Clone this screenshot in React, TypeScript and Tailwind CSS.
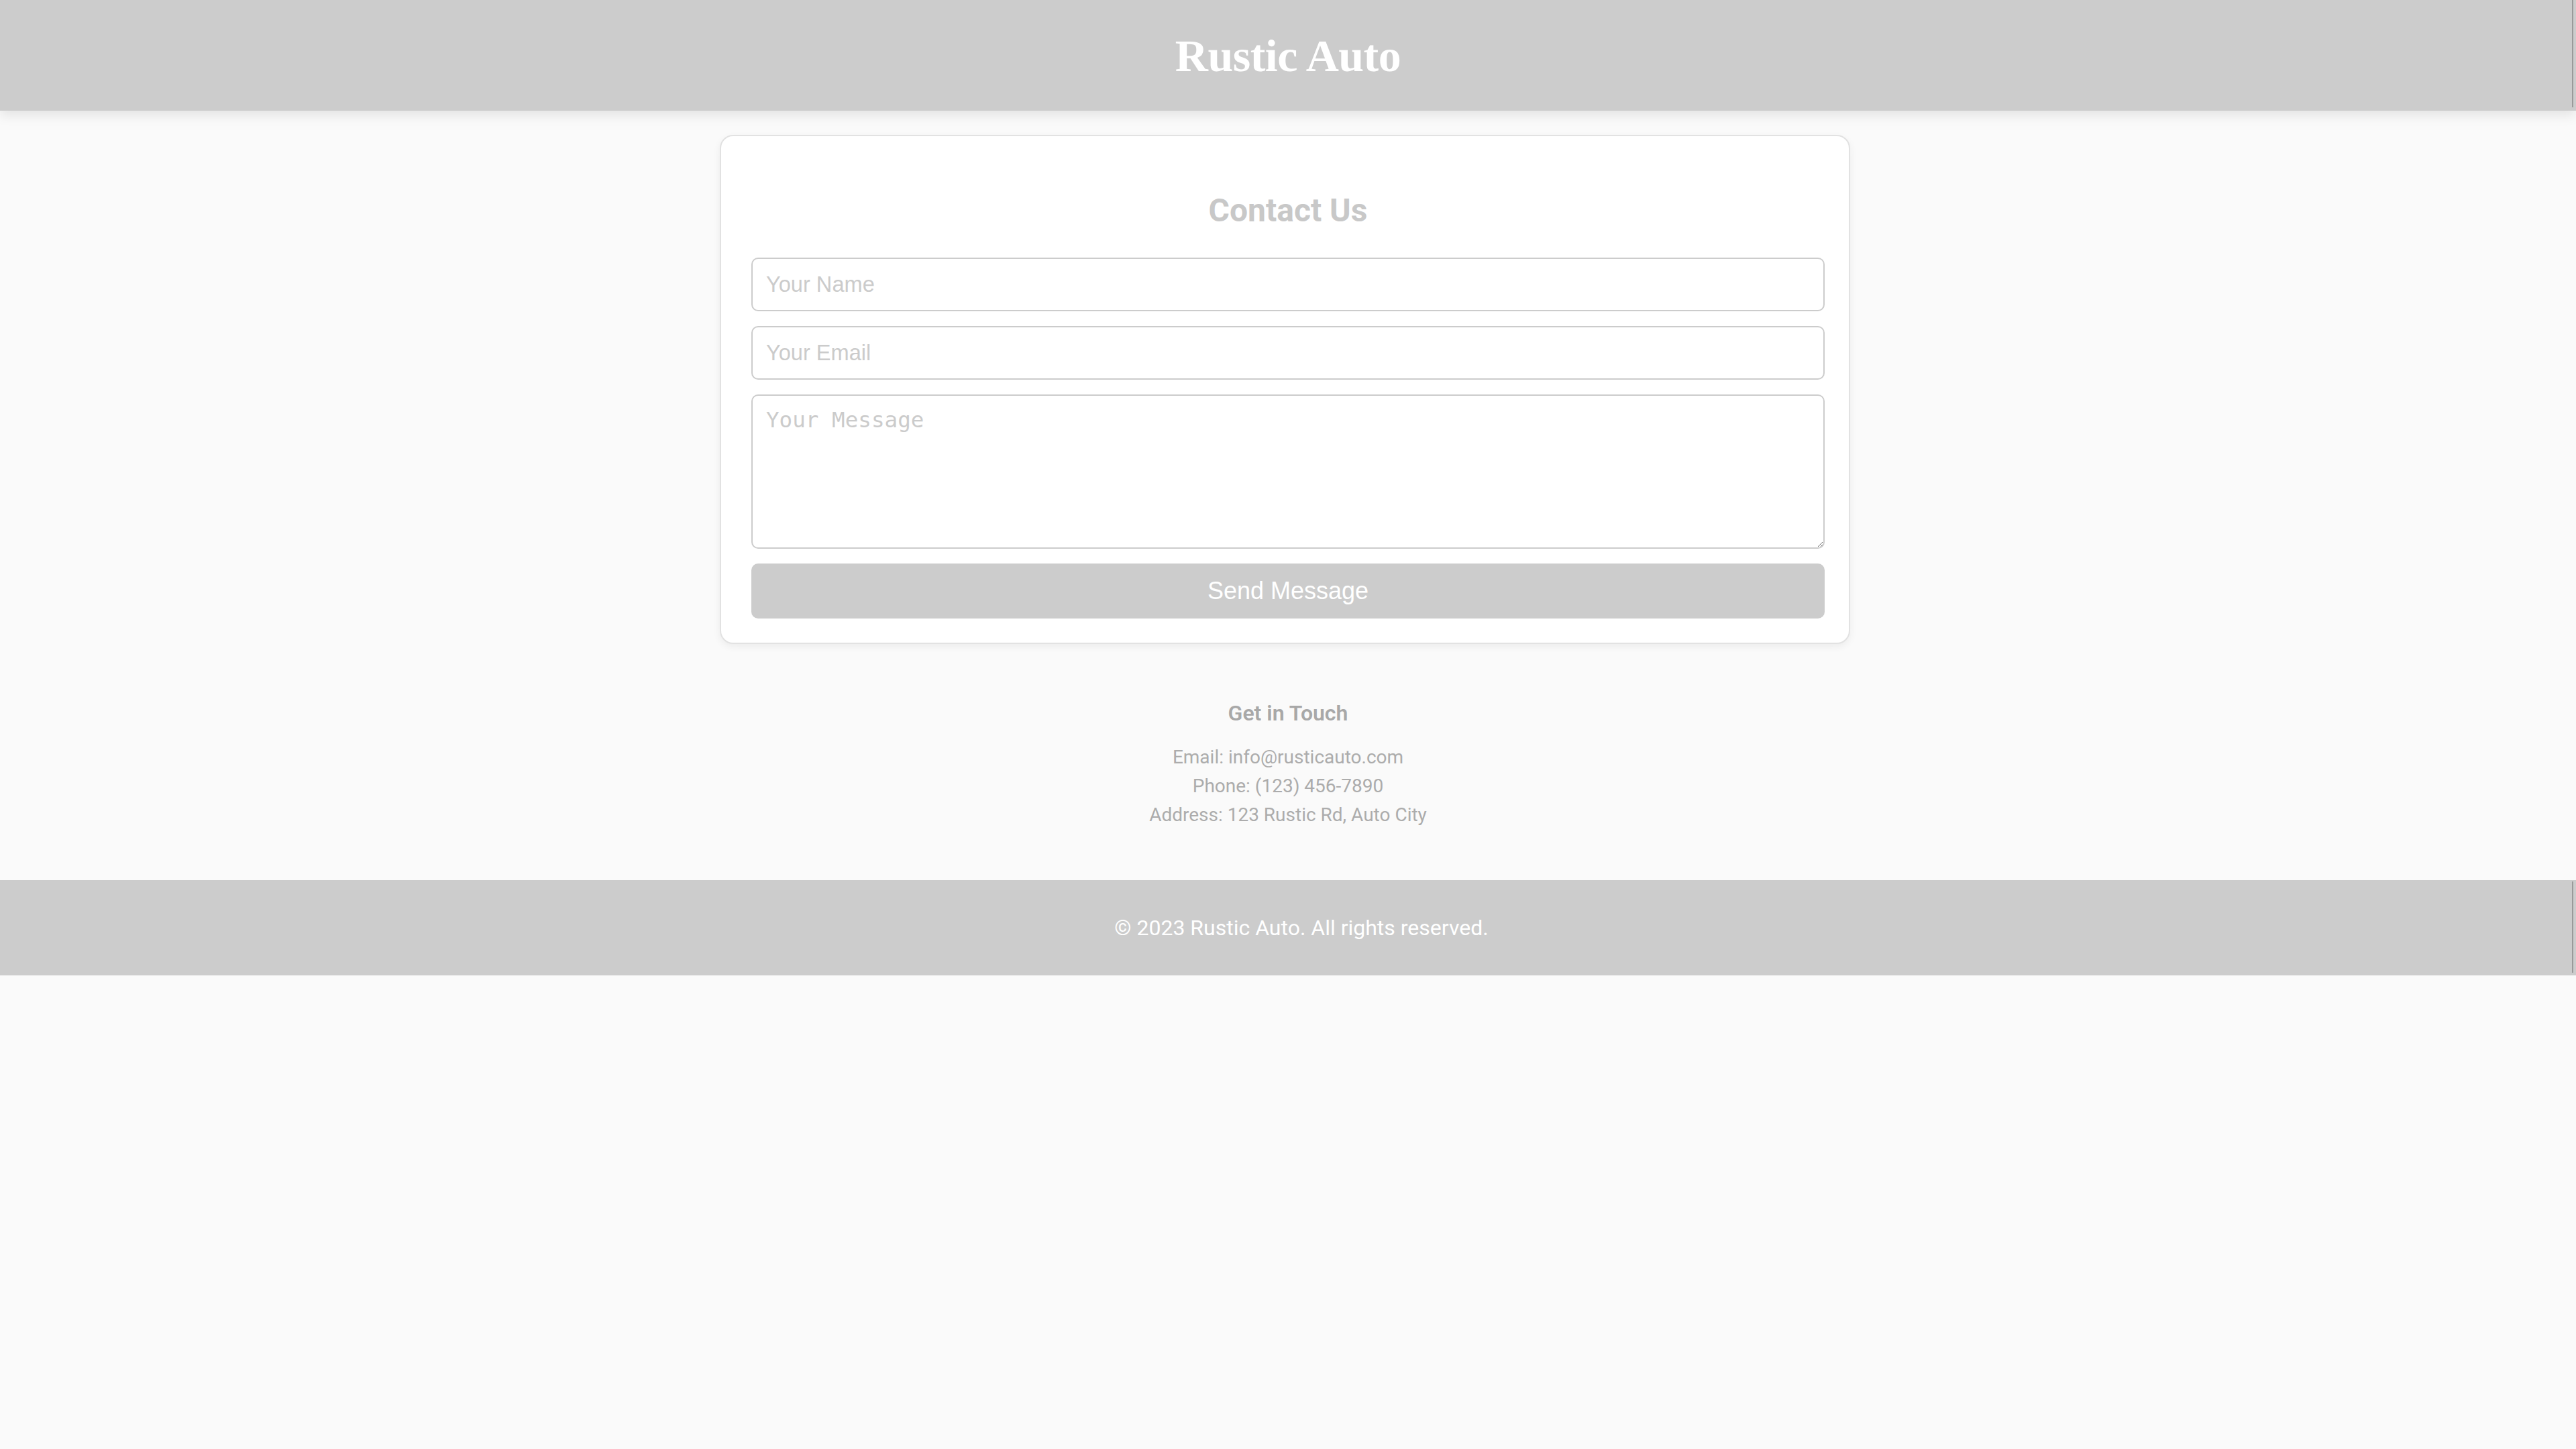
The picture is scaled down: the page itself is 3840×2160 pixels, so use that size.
import React from "react";

export default function App() {
  return (
    <div className="min-h-[2160px] w-full bg-[#fafafa] font-['Roboto',sans-serif]">
      <header className="relative flex h-[165px] w-full items-center justify-center bg-[#cccccc] shadow-[0_6px_18px_rgba(0,0,0,0.1)]">
        <h1 className="font-['Liberation_Serif',serif] text-[68px] font-bold leading-none tracking-[-0.5px] text-white">
          Rustic Auto
        </h1>
        <span className="absolute right-[4px] top-0 h-[160px] w-[2px] bg-[#9a9a9a]" />
      </header>

      <main className="flex w-full flex-col items-center pr-[9px] pt-[36px]">
        <div className="w-[1685px] rounded-[20px] border-2 border-[#e2e2e2] bg-white pb-[36px] pl-[45px] pr-[36px] pt-[83px] shadow-[0_4px_12px_rgba(0,0,0,0.06)]">
          <h2 className="mb-[42px] text-center text-[48px] font-bold leading-[56px] text-[#c8c8c8]">
            Contact Us
          </h2>
          <form className="flex flex-col gap-[22px]" onSubmit={(e) => e.preventDefault()}>
            <input
              type="text"
              placeholder="Your Name"
              className="h-[80px] w-[1600px] rounded-[10px] border-2 border-[#cccccc] bg-white px-[20px] font-['Liberation_Sans',sans-serif] text-[32.6px] text-[#555] placeholder:text-[#cbcbcb] outline-none"
            />
            <input
              type="email"
              placeholder="Your Email"
              className="h-[80px] w-[1600px] rounded-[10px] border-2 border-[#cccccc] bg-white px-[20px] font-['Liberation_Sans',sans-serif] text-[32.6px] text-[#555] placeholder:text-[#cbcbcb] outline-none"
            />
            <textarea
              placeholder="Your Message"
              className="block h-[230px] w-[1600px] rounded-[10px] border-2 border-[#cccccc] bg-white px-[20px] py-[16px] font-['DejaVu_Sans_Mono',monospace] text-[32.6px] leading-[40px] text-[#555] placeholder:text-[#cbcbcb] outline-none"
            />
            <button
              type="submit"
              className="h-[82px] w-[1600px] rounded-[10px] bg-[#cccccc] font-['Liberation_Sans',sans-serif] text-[36px] text-white"
            >
              Send Message
            </button>
          </form>
        </div>

        <section className="mt-[80px] flex flex-col items-center pl-[9px] text-center">
          <h3 className="mb-[21px] text-[32px] font-semibold leading-[46px] text-[#a8a8a8]">
            Get in Touch
          </h3>
          <p className="text-[28px] leading-[43px] text-[#acacac]">Email: info@rusticauto.com</p>
          <p className="text-[28px] leading-[43px] text-[#acacac]">Phone: (123) 456-7890</p>
          <p className="text-[28px] leading-[43px] text-[#acacac]">Address: 123 Rustic Rd, Auto City</p>
        </section>
      </main>

      <footer className="relative mt-[76px] flex h-[142px] w-full items-center justify-center bg-[#cccccc] pl-[40px]">
        <p className="text-[32px] leading-none text-white">© 2023 Rustic Auto. All rights reserved.</p>
        <span className="absolute right-[4px] top-[2px] h-[136px] w-[2px] bg-[#9a9a9a]" />
      </footer>
    </div>
  );
}
